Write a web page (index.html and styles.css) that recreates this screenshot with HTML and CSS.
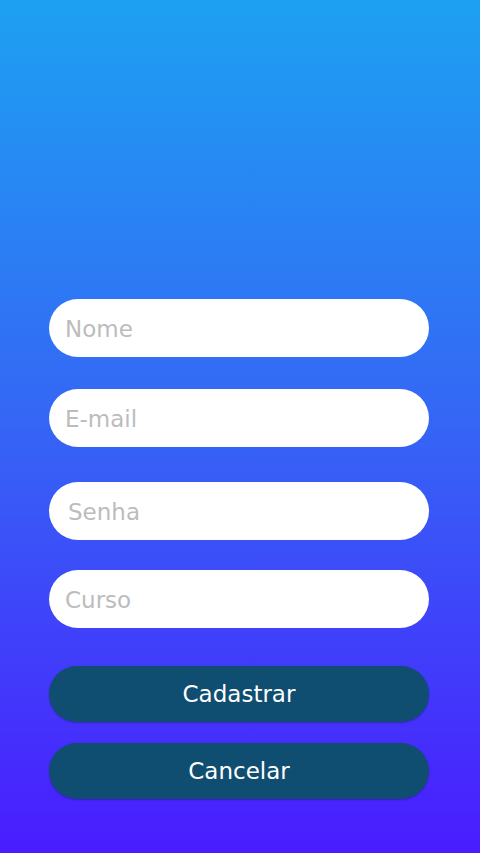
FILE: index.html
```html
<!DOCTYPE html>
<html lang="pt-BR">
<head>
<meta charset="utf-8">
<title>Cadastro</title>
<link rel="stylesheet" href="styles.css">
</head>
<body>
<main class="screen">
  <form class="form">
    <input class="field field-nome" type="text" placeholder="Nome">
    <input class="field field-email" type="email" placeholder="E-mail">
    <input class="field field-senha" type="password" placeholder="Senha">
    <input class="field field-curso" type="text" placeholder="Curso">
    <button class="btn btn-primary" type="button">Cadastrar</button>
    <button class="btn btn-secondary" type="button">Cancelar</button>
  </form>
</main>
</body>
</html>
```
FILE: styles.css
```css
html, body {
  margin: 0;
  padding: 0;
}
body {
  width: 480px;
  height: 853px;
  overflow: hidden;
  font-family: "DejaVu Sans", "Open Sans", sans-serif;
}
.screen {
  height: 853px;
  background: linear-gradient(180deg, #1da1f2 0%, #3565f5 50%, #4a1cff 100%);
  box-sizing: border-box;
  padding: 299px 51px 0 49px;
}
.form {
  display: flex;
  flex-direction: column;
}
.field {
  box-sizing: border-box;
  height: 58px;
  width: 100%;
  border: none;
  outline: none;
  border-radius: 29px;
  background: #ffffff;
  padding: 2px 0 0 16px;
  font-family: inherit;
  font-size: 23px;
  font-weight: 400;
  color: #555;
}
.field::placeholder {
  color: #bcbcbc;
}
.field-email { margin-top: 32px; }
.field-senha { margin-top: 35px; padding-left: 19px; }
.field-curso { margin-top: 30px; }
.btn {
  box-sizing: border-box;
  width: 100%;
  border: none;
  border-radius: 28px;
  background: #0f4e70;
  color: #ffffff;
  font-family: inherit;
  font-size: 23px;
  font-weight: 400;
  padding: 0;
  box-shadow: 0 1px 2px rgba(0, 0, 0, 0.25);
}
.btn-primary {
  height: 56px;
  margin-top: 38px;
}
.btn-secondary {
  height: 56px;
  margin-top: 21px;
}
```
